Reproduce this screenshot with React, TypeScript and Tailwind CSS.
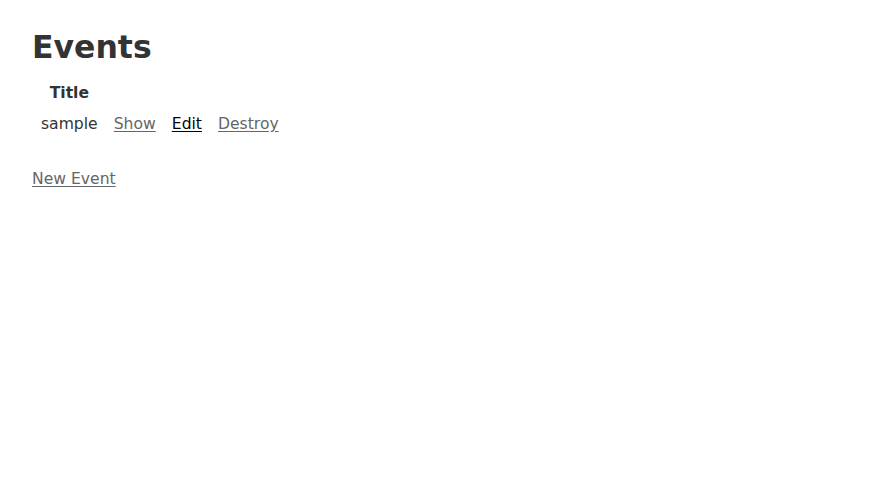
import React from 'react';

const events = [{ id: 1, title: 'sample' }];

export default function App() {
  return (
    <div
      className="min-h-screen bg-white px-8 pt-[29px] text-[15.6px] leading-[21.6px] text-[#333]"
      style={{ fontFamily: '"DejaVu Sans", Verdana, Arial, sans-serif' }}
    >
      <h1 className="text-[31.5px] font-bold leading-[36px]">Events</h1>

      <table className="mt-[16px] border-separate border-spacing-[2px]">
        <thead>
          <tr>
            <th className="px-[7px] pb-[7px] text-center font-bold">Title</th>
            <th colSpan={3}></th>
          </tr>
        </thead>
        <tbody>
          {events.map((event) => (
            <tr key={event.id}>
              <td className="px-[7px] pb-[7px]">{event.title}</td>
              <td className="px-[7px] pb-[7px]">
                <a href="#" className="text-[#666] underline underline-offset-2">Show</a>
              </td>
              <td className="px-[7px] pb-[7px]">
                <a href="#" className="text-black underline underline-offset-2">Edit</a>
              </td>
              <td className="px-[7px] pb-[7px]">
                <a href="#" className="text-[#666] underline underline-offset-2">Destroy</a>
              </td>
            </tr>
          ))}
        </tbody>
      </table>

      <p className="mt-[25px]">
        <a href="#" className="text-[#666] underline underline-offset-2">New Event</a>
      </p>
    </div>
  );
}
